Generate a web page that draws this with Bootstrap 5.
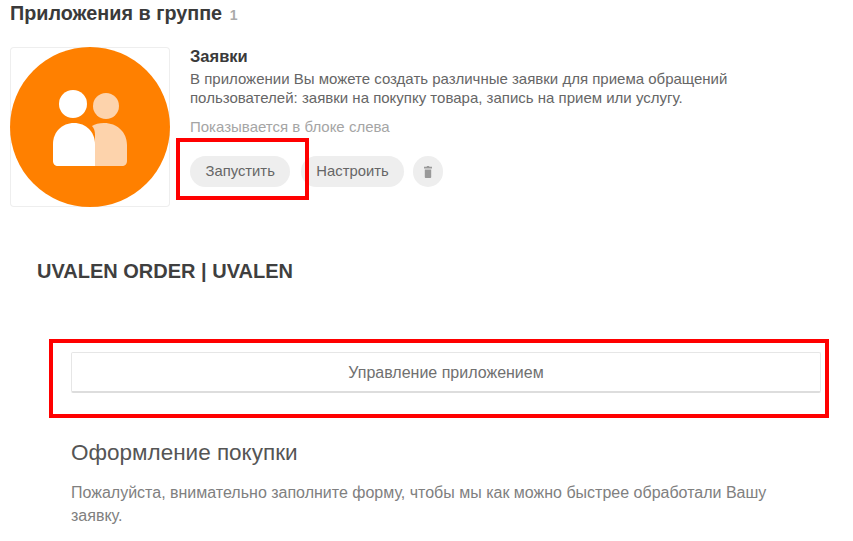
<!DOCTYPE html>
<html lang="ru">

    <head>
        <meta charset="UTF-8">
        <title>Приложения в группе</title>
        <meta name="viewport" content="width=device-width, initial-scale=1.0">
        <link href="https://cdn.jsdelivr.net/npm/bootstrap@5.3.0/dist/css/bootstrap.min.css" rel="stylesheet">
        <style>
            body {
                font-family: "Liberation Sans", Arial, sans-serif;
                background: #fff;
                overflow: hidden;
            }

            .shot {
                position: relative;
                height: 541px;
                padding: 3px 0 0 10px;
            }

            .group-title {
                font-size: 19.8px;
                font-weight: 700;
                line-height: 20px;
                color: #3a3a3a;
                margin: 0 0 22px;
            }

            .group-count {
                font-size: 14px;
                color: #aaa;
                margin-left: 2px;
            }

            .app-thumb {
                width: 160px;
                height: 160px;
                flex-shrink: 0;
                border-radius: 4px;
                box-shadow: inset 0 0 0 1px #eee;
            }

            .app-info {
                margin: -1px 0 0 20px;
            }

            .app-name {
                font-size: 16.5px;
                font-weight: 700;
                line-height: 20px;
                color: #3a3a3a;
            }

            .app-desc {
                font-size: 15px;
                line-height: 19px;
                color: #666;
                margin: 3px 0 10px;
                width: 560px;
            }

            .app-shown {
                font-size: 15px;
                line-height: 19px;
                color: #a5a5a5;
                margin-bottom: 20px;
            }

            .pill-btn {
                background: #eee;
                color: #666;
                border: 0;
                border-radius: 16px;
                height: 31px;
                font-size: 14.8px;
                line-height: 31px;
                padding: 0 15px;
            }

            .pill-run {
                padding: 0 15.5px;
                margin-right: 3px;
            }

            .pill-round {
                width: 30px;
                padding: 0;
                margin-left: 1px;
            }

            .order-title {
                font-size: 20px;
                font-weight: 700;
                line-height: 24px;
                color: #3f3f3f;
                margin: 52px 0 0 27px;
            }

            .order-body {
                margin: 69px 0 0 61px;
                width: 750px;
            }

            .manage-btn {
                height: 41px;
                line-height: 39px;
                padding: 0;
                background: #fff;
                border: 1px solid #e6e6e6;
                border-bottom: 2px solid #ddd;
                border-radius: 2px;
                font-size: 16px;
                color: #707070;
            }

            .order-head {
                font-size: 22.5px;
                line-height: 26px;
                color: #555;
                font-weight: 400;
                margin: 47px 0 15px;
            }

            .order-text {
                font-size: 16px;
                line-height: 23px;
                color: #808080;
                margin: 0;
            }

            .red-box {
                position: absolute;
                border: 4px solid #f00;
                pointer-events: none;
            }

            .red-box-run {
                left: 176px;
                top: 138px;
                width: 133px;
                height: 62px;
            }

            .red-box-manage {
                left: 49px;
                top: 339px;
                width: 780px;
                height: 79px;
            }
        </style>
    </head>

    <body>

        <div class="shot">
            <h2 class="group-title">Приложения в группе <span class="group-count">1</span></h2>

            <div class="d-flex">
                <div class="app-thumb">
                    <svg width="160" height="160" viewBox="0 0 160 160">
                        <circle cx="80" cy="80" r="80" fill="#ff8000"/>
                        <circle cx="63" cy="57" r="14" fill="#fff"/>
                        <circle cx="96" cy="59" r="13" fill="#fdd3ac"/>
                        <path d="M85 119V88c0-4-1-7-3-9 3-2 7-3 12-3 13 0 23 9 23 22v16c0 3-2 5-5 5z" fill="#fdd3ac"/>
                        <path d="M85 119H48c-3 0-5-2-5-5V97c0-12 9-21 21-21s21 9 21 21z" fill="#fff"/>
                    </svg>
                </div>
                <div class="app-info">
                    <div class="app-name">Заявки</div>
                    <p class="app-desc">В приложении Вы можете создать различные заявки для приема обращений пользователей: заявки на покупку товара, запись на прием или услугу.</p>
                    <div class="app-shown">Показывается в блоке слева</div>
                    <div class="d-flex gap-2">
                        <button class="btn pill-btn pill-run">Запустить</button>
                        <button class="btn pill-btn">Настроить</button>
                        <button class="btn pill-btn pill-round" aria-label="Удалить">
                            <svg width="8" height="12" viewBox="0 0 10 14" preserveAspectRatio="none">
                                <path d="M3.5 0h3v1H10v2H0V1h3.5zM1 4h8v9c0 .6-.4 1-1 1H2c-.6 0-1-.4-1-1z" fill="#999"/>
                            </svg>
                        </button>
                    </div>
                </div>
            </div>

            <h3 class="order-title">UVALEN ORDER | UVALEN</h3>

            <div class="order-body">
                <button class="btn manage-btn w-100">Управление приложением</button>
                <h4 class="order-head">Оформление покупки</h4>
                <p class="order-text">Пожалуйста, внимательно заполните форму, чтобы мы как можно быстрее обработали Вашу заявку.</p>
            </div>

            <div class="red-box red-box-run"></div>
            <div class="red-box red-box-manage"></div>
        </div>

    </body>

</html>
